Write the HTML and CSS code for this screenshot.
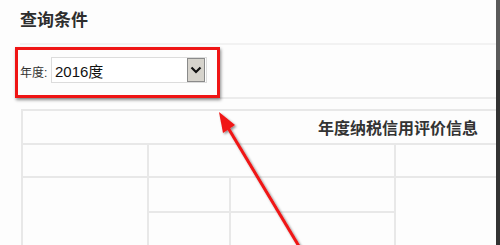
FILE: index.html
```html
<!DOCTYPE html>
<html lang="zh-CN">
<head>
    <meta charset="UTF-8">
    <title>查询条件</title>
    <link rel="stylesheet" href="styles.css">
</head>
<body>
    <div class="panel">
        <div class="title">查询条件</div>

        <div class="query-row">
            <span class="label">年度:</span>
            <div class="select-box">
                <span class="select-text">2016度</span>
                <span class="select-btn">
                    <svg width="12" height="8" viewBox="0 0 12 8"><polyline points="1.5,1.5 6,6 10.5,1.5" fill="none" stroke="#111" stroke-width="2.2"/></svg>
                </span>
            </div>
        </div>

        <table class="credit-table">
            <colgroup>
                <col class="col-a">
                <col class="col-b">
                <col class="col-c">
                <col class="col-d">
            </colgroup>
            <tr class="row-head">
                <th colspan="4">年度纳税信用评价信息</th>
            </tr>
            <tr class="row-a">
                <td></td>
                <td colspan="2"></td>
                <td></td>
            </tr>
            <tr class="row-b">
                <td rowspan="2"></td>
                <td></td>
                <td></td>
                <td rowspan="2"></td>
            </tr>
            <tr class="row-b">
                <td></td>
                <td></td>
            </tr>
        </table>
    </div>

    <!-- 标注 -->
    <div class="mark-box"></div>
    <svg class="mark-arrow" width="500" height="245" viewBox="0 0 500 245">
        <defs>
            <filter id="shadow" x="-20%" y="-20%" width="140%" height="140%">
                <feDropShadow dx="1.5" dy="1.5" stdDeviation="1.2" flood-color="#000" flood-opacity="0.45"/>
            </filter>
        </defs>
        <g filter="url(#shadow)">
            <line x1="300" y1="248" x2="227" y2="126" stroke="#f01414" stroke-width="3"/>
            <polygon points="219,112 223,133 235,125" fill="#f01414"/>
        </g>
    </svg>
    <div class="scroll-edge"></div>
</body>
</html>
```

FILE: styles.css
```css
body {
    margin: 0;
    background-color: #fdfdfd;
    font-family: "Liberation Sans", "Noto Sans CJK SC", sans-serif;
    color: #333;
    overflow: hidden;
    width: 500px;
    height: 245px;
}
.panel {
    padding-left: 20px;
}
.title {
    height: 43px;
    line-height: 42px;
    font-size: 17px;
    font-weight: bold;
    color: #2e2e2e;
}
.query-row {
    display: flex;
    align-items: center;
    gap: 1px;
    height: 52px;
    border-top: 2px solid #f2f2f2;
    border-bottom: 2px solid #ececec;
    width: 476px;
}
.label {
    font-size: 12px;
    color: #333;
    width: 30px;
}
.select-box {
    display: flex;
    align-items: center;
    justify-content: space-between;
    width: 154px;
    height: 24px;
    border: 1px solid #dcdcdc;
    background: #fff;
    margin-top: -2px;
}
.select-text {
    font-size: 15px;
    color: #111;
    padding-left: 3px;
}
.select-btn {
    display: flex;
    align-items: center;
    justify-content: center;
    width: 16px;
    height: 22px;
    margin-right: 1px;
    background: #d6d3cc;
    border: 1px solid #8a8a8a;
}
.credit-table {
    margin-top: 10px;
    margin-left: 1px;
    width: 475px;
    border-collapse: collapse;
    table-layout: fixed;
}
.credit-table th,
.credit-table td {
    border: 2px solid #e8e8e8;
    padding: 0;
}
.credit-table th {
    height: 32px;
    font-size: 16px;
    font-weight: bold;
    color: #333;
    text-align: right;
    padding-right: 18px;
}
.row-a td {
    height: 31px;
}
.row-b td {
    height: 33px;
}
.col-a {
    width: 126px;
}
.col-b {
    width: 82px;
}
.col-c {
    width: 165px;
}
.col-d {
    width: 102px;
}
.mark-box {
    position: absolute;
    left: 15px;
    top: 47px;
    width: 199px;
    height: 45px;
    border: 3px solid #ef1515;
    box-shadow: 1px 2px 3px rgba(0,0,0,0.45);
}
.mark-arrow {
    position: absolute;
    left: 0;
    top: 0;
}
.scroll-edge {
    position: fixed;
    top: 0;
    right: 0;
    width: 4px;
    height: 245px;
    background: linear-gradient(#5a5a5a 0, #5a5a5a 70px, #333 70px);
}
```
